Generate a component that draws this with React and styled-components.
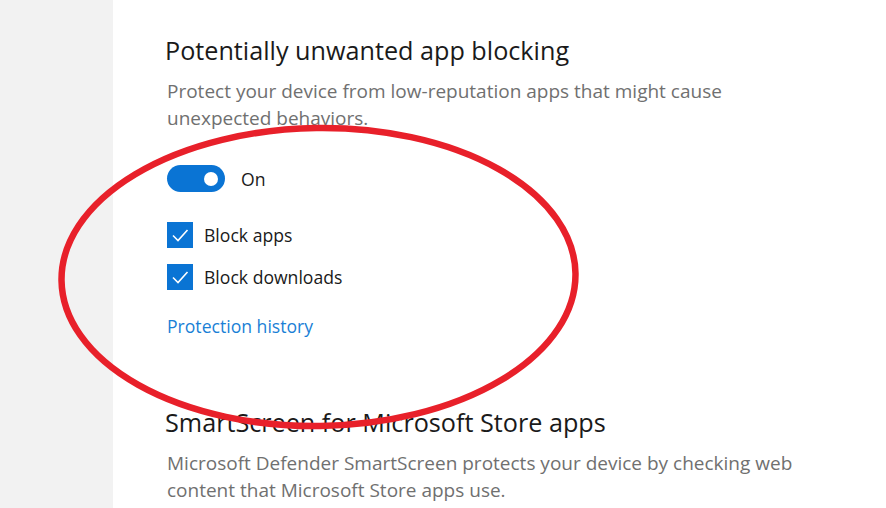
import React from "react";
import styled, { createGlobalStyle } from "styled-components";

const Global = createGlobalStyle`
  html, body { margin: 0; padding: 0; background: #ffffff; }
  body { font-family: "Open Sans", "Noto Sans", sans-serif; }
`;

const Page = styled.div`
  position: relative;
  display: flex;
  width: 886px;
  height: 508px;
  overflow: hidden;
  background: #ffffff;
`;

const Sidebar = styled.div`
  width: 113px;
  flex: none;
  background: #f2f2f2;
`;

const Main = styled.main`
  flex: 1;
  display: flex;
  flex-direction: column;
  padding: 33px 0 0 52px;
`;

const Section = styled.section`
  display: flex;
  flex-direction: column;
  margin-bottom: ${(p) => p.$gap || 0}px;
`;

const Title = styled.h2`
  margin: 0;
  font-weight: 400;
  font-size: 25.2px;
  line-height: 34px;
  color: #1a1a1a;
`;

const Desc = styled.p`
  margin: 11px 0 0 2px;
  font-size: 19px;
  line-height: 27px;
  color: #707070;
  width: 630px;
`;

const ToggleRow = styled.div`
  display: flex;
  align-items: center;
  gap: 16px;
  margin: 33px 0 0 2px;
  font-size: 17.6px;
  color: #1a1a1a;
`;

const Toggle = styled.div`
  width: 58px;
  height: 27px;
  border-radius: 14px;
  background: #0a74d4;
  position: relative;
  flex: none;
  &::after {
    content: "";
    position: absolute;
    right: 7px;
    top: 6.5px;
    width: 14px;
    height: 14px;
    border-radius: 50%;
    background: #ffffff;
  }
`;

const CheckList = styled.div`
  display: flex;
  flex-direction: column;
  gap: 16px;
  margin: 30px 0 0 2px;
`;

const CheckRow = styled.label`
  display: flex;
  align-items: center;
  gap: 11px;
  font-size: 17.6px;
  color: #1a1a1a;
`;

const Box = styled.span`
  width: 26px;
  height: 26px;
  background: #0a74d4;
  display: flex;
  align-items: center;
  justify-content: center;
  flex: none;
`;

const Link = styled.a`
  margin: 24px 0 0 2px;
  font-size: 17.6px;
  color: #1a7fd6;
  text-decoration: none;
  line-height: 24px;
`;

const Ring = styled.svg`
  position: absolute;
  left: 0;
  top: 0;
  pointer-events: none;
`;

const Check = () => (
  <svg width="20" height="20" viewBox="0 0 20 20">
    <path d="M3 10.5 L8 15.5 L17.5 5" fill="none" stroke="#ffffff" strokeWidth="1.6" />
  </svg>
);

export default function App() {
  return (
    <Page>
      <Global />
      <Sidebar />
      <Main>
        <Section $gap={67}>
          <Title>Potentially unwanted app blocking</Title>
          <Desc>
            Protect your device from low-reputation apps that might cause unexpected behaviors.
          </Desc>
          <ToggleRow>
            <Toggle />
            <span>On</span>
          </ToggleRow>
          <CheckList>
            <CheckRow>
              <Box><Check /></Box>
              Block apps
            </CheckRow>
            <CheckRow>
              <Box><Check /></Box>
              Block downloads
            </CheckRow>
          </CheckList>
          <Link href="#">Protection history</Link>
        </Section>
        <Section>
          <Title>SmartScreen for Microsoft Store apps</Title>
          <Desc>
            Microsoft Defender SmartScreen protects your device by checking web content that Microsoft Store apps use.
          </Desc>
        </Section>
      </Main>
      <Ring width="886" height="508" viewBox="0 0 886 508">
        <ellipse cx="318.5" cy="277" rx="257" ry="149" fill="none" stroke="#e8202a" strokeWidth="6.5" transform="rotate(-0.8 318.5 277)" />
      </Ring>
    </Page>
  );
}
